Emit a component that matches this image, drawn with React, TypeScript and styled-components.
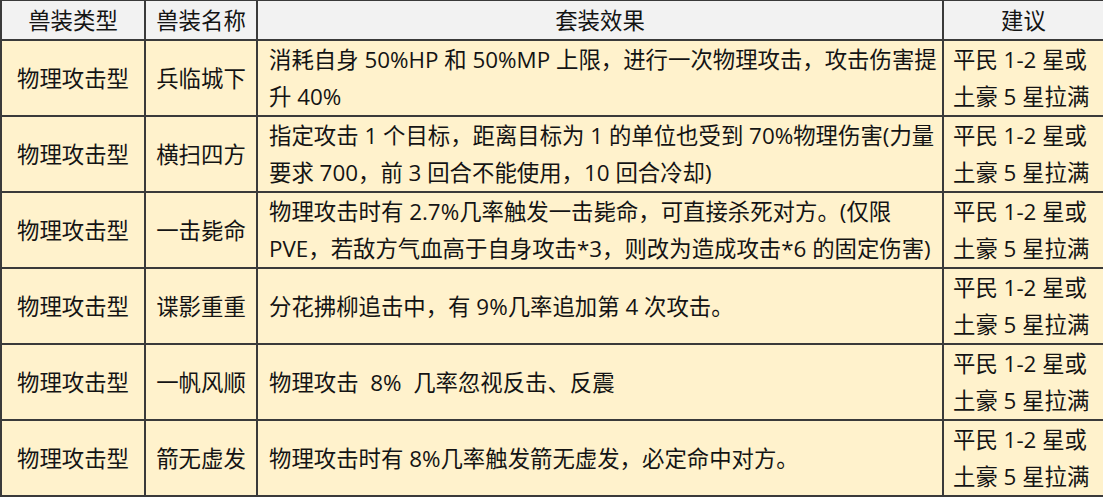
import React from "react";
import styled, { createGlobalStyle } from "styled-components";

const GlobalStyle = createGlobalStyle`
  html, body {
    margin: 0;
    padding: 0;
    background: #ffffff;
  }
`;

const Table = styled.table`
  width: 1103px;
  table-layout: fixed;
  border-collapse: collapse;
  font-family: "Open Sans", "Noto Sans CJK SC", sans-serif;
  font-size: 22.4px;
  color: #141414;
`;

const HeadCell = styled.th`
  height: 38px;
  padding: 0;
  background: #f2f2f2;
  border: 2px solid #3a3a3a;
  border-top-width: 1px;
  font-weight: 400;
  text-align: center;
  line-height: 37px;
`;

const Cell = styled.td<{ $align?: "left" | "center" }>`
  height: 74px;
  padding: 0 0 0 ${(p) => (p.$align === "left" ? "11px" : "0")};
  background: #fff2cc;
  border: 2px solid #3a3a3a;
  text-align: ${(p) => p.$align ?? "center"};
  vertical-align: middle;
  line-height: 37px;
  white-space: pre;
`;

const AdviceCell = styled(Cell)`
  padding: 0 0 0 9px;
  text-align: left;
`;

type Row = { kind: string; name: string; effect: string[] };

const rows: Row[] = [
  {
    kind: "物理攻击型",
    name: "兵临城下",
    effect: ["消耗自身 50%HP 和 50%MP 上限，进行一次物理攻击，攻击伤害提", "升 40%"],
  },
  {
    kind: "物理攻击型",
    name: "横扫四方",
    effect: ["指定攻击 1 个目标，距离目标为 1 的单位也受到 70%物理伤害(力量", "要求 700，前 3 回合不能使用，10 回合冷却)"],
  },
  {
    kind: "物理攻击型",
    name: "一击毙命",
    effect: ["物理攻击时有 2.7%几率触发一击毙命，可直接杀死对方。(仅限", "PVE，若敌方气血高于自身攻击*3，则改为造成攻击*6 的固定伤害)"],
  },
  { kind: "物理攻击型", name: "谍影重重", effect: ["分花拂柳追击中，有 9%几率追加第 4 次攻击。"] },
  { kind: "物理攻击型", name: "一帆风顺", effect: ["物理攻击  8%  几率忽视反击、反震"] },
  { kind: "物理攻击型", name: "箭无虚发", effect: ["物理攻击时有 8%几率触发箭无虚发，必定命中对方。"] },
];

export default function App() {
  return (
    <>
      <GlobalStyle />
      <Table>
        <colgroup>
          <col style={{ width: 144 }} />
          <col style={{ width: 112 }} />
          <col style={{ width: 686 }} />
          <col style={{ width: 161 }} />
        </colgroup>
        <thead>
          <tr>
            <HeadCell>兽装类型</HeadCell>
            <HeadCell>兽装名称</HeadCell>
            <HeadCell>套装效果</HeadCell>
            <HeadCell>建议</HeadCell>
          </tr>
        </thead>
        <tbody>
          {rows.map((r, i) => (
            <tr key={i}>
              <Cell>{r.kind}</Cell>
              <Cell>{r.name}</Cell>
              <Cell $align="left">
                {r.effect.map((line, j) => (
                  <React.Fragment key={j}>
                    {j > 0 && <br />}
                    {line}
                  </React.Fragment>
                ))}
              </Cell>
              <AdviceCell>
                平民 1-2 星或
                <br />
                土豪 5 星拉满
              </AdviceCell>
            </tr>
          ))}
        </tbody>
      </Table>
    </>
  );
}
